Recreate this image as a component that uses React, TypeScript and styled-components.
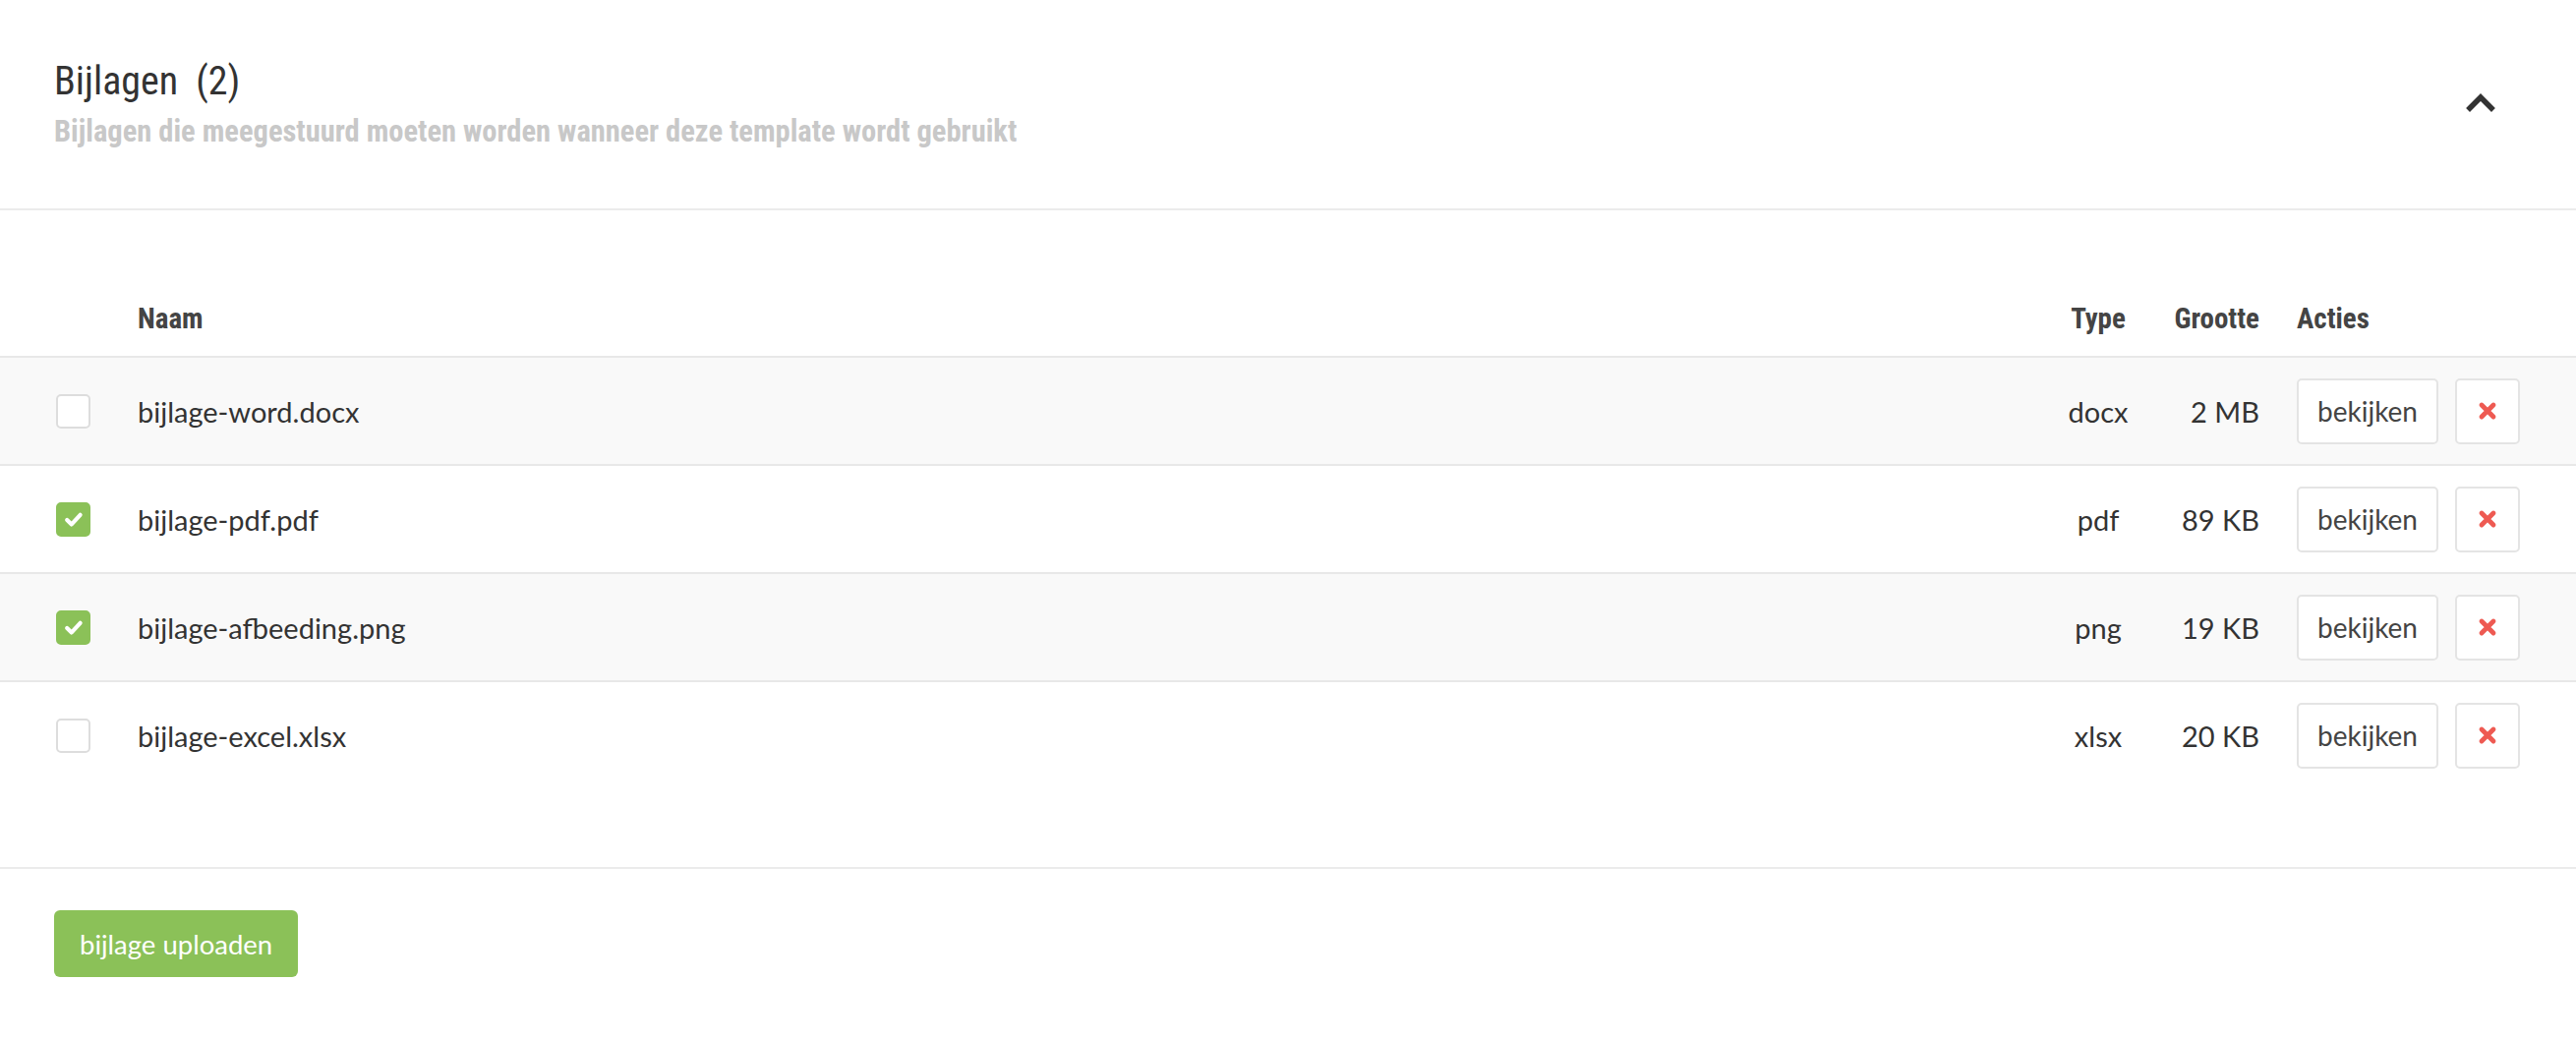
import React from 'react';
import styled, { createGlobalStyle } from 'styled-components';

const condensed = `"Roboto Condensed", "Liberation Sans Narrow", "DejaVu Sans Condensed", Roboto, sans-serif`;
const bodyFont = `Lato, "Open Sans", sans-serif`;

const GlobalStyle = createGlobalStyle`
  html, body {
    margin: 0;
    padding: 0;
    background: #FFFFFF;
  }
  body {
    font-family: ${bodyFont};
    color: #333333;
  }
`;

const StyledPanel = styled.div`
  width: 2620px;
  background: #FFFFFF;
`;

const StyledPanelHeader = styled.div`
  display: flex;
  justify-content: space-between;
  align-items: center;
  height: 214px;
  padding: 0 82px 0 55px;
  box-sizing: border-box;
  border-bottom: 2px solid #EBEBEB;
  h2 {
    margin: 0;
    font-family: ${condensed};
    font-weight: 400;
    font-size: 40px;
    line-height: 46px;
    color: #333333;
    span {
      margin-left: 18px;
    }
  }
  p {
    margin: 10px 0 0;
    font-family: ${condensed};
    font-weight: 700;
    font-size: 30.5px;
    line-height: 36px;
    color: #C8C8C8;
  }
`;

const StyledToggle = styled.button`
  display: flex;
  align-items: center;
  justify-content: center;
  width: 30px;
  height: 30px;
  padding: 0;
  border: none;
  background: none;
  margin-top: -4px;
`;

const StyledTableSection = styled.div`
  padding: 71px 0 80px;
  border-bottom: 2px solid #EBEBEB;
`;

const StyledRow = styled.div<{ $head?: boolean; $striped?: boolean }>`
  display: grid;
  grid-template-columns: 85px 1fr 100px 114px 267px;
  align-items: center;
  padding: 0 55px;
  height: ${p => (p.$head ? '77px' : '108px')};
  background: ${p => (p.$striped ? '#F9F9F9' : '#FFFFFF')};
  border-top: ${p => (p.$head ? 'none' : '2px solid #E8E8E8')};
  font-family: ${p => (p.$head ? condensed : bodyFont)};
  font-weight: ${p => (p.$head ? 700 : 400)};
  font-size: 29px;
  color: ${p => (p.$head ? '#444444' : '#333333')};

  .type {
    text-align: center;
  }
  .size {
    text-align: right;
  }
  .actions {
    display: flex;
    align-items: center;
    gap: 17px;
    padding-left: 38px;
  }
`;

const StyledCheckbox = styled.span<{ $checked: boolean }>`
  display: flex;
  align-items: center;
  justify-content: center;
  width: 35px;
  height: 35px;
  box-sizing: border-box;
  margin-left: 2px;
  border-radius: 5px;
  border: 2px solid ${p => (p.$checked ? '#8BC158' : '#DDDDDD')};
  background: ${p => (p.$checked ? '#8BC158' : '#FFFFFF')};
`;

const StyledButton = styled.button<{ $square?: boolean }>`
  display: flex;
  align-items: center;
  justify-content: center;
  height: 67px;
  width: ${p => (p.$square ? '66px' : '144px')};
  padding: 0;
  box-sizing: border-box;
  border: 2px solid #E4E4E4;
  border-radius: 5px;
  background: #FFFFFF;
  font-family: ${bodyFont};
  font-size: 28px;
  color: #444444;
`;

const StyledFooter = styled.div`
  padding: 42px 55px 60px;
`;

const StyledUploadButton = styled.button`
  height: 68px;
  padding: 0 26px;
  border: none;
  border-radius: 6px;
  background: #8BC158;
  font-family: ${bodyFont};
  font-size: 27.5px;
  color: #FFFFFF;
`;

const attachments = [
  { name: 'bijlage-word.docx', type: 'docx', size: '2 MB', checked: false },
  { name: 'bijlage-pdf.pdf', type: 'pdf', size: '89 KB', checked: true },
  { name: 'bijlage-afbeeding.png', type: 'png', size: '19 KB', checked: true },
  { name: 'bijlage-excel.xlsx', type: 'xlsx', size: '20 KB', checked: false },
];

const ChevronUp = () => (
  <svg width="30" height="20" viewBox="0 0 30 20">
    <polyline points="4,16 15,5 26,16" fill="none" stroke="#333333" strokeWidth="5.5" strokeLinecap="square" strokeLinejoin="miter" />
  </svg>
);

const Check = () => (
  <svg width="20" height="17" viewBox="0 0 20 17">
    <polyline points="3.2,9 7.8,13.4 16.6,3.8" fill="none" stroke="#FFFFFF" strokeWidth="4.2" strokeLinecap="round" strokeLinejoin="round" />
  </svg>
);

const Cross = () => (
  <svg width="20" height="20" viewBox="0 0 20 20">
    <path d="M4 4 L16 16 M16 4 L4 16" fill="none" stroke="#EE5A52" strokeWidth="4.8" strokeLinecap="round" />
  </svg>
);

const App = () => {
  return (
    <StyledPanel>
      <GlobalStyle />
      <StyledPanelHeader>
        <div>
          <h2>Bijlagen<span>(2)</span></h2>
          <p>Bijlagen die meegestuurd moeten worden wanneer deze template wordt gebruikt</p>
        </div>
        <StyledToggle>
          <ChevronUp />
        </StyledToggle>
      </StyledPanelHeader>

      <StyledTableSection>
        <StyledRow $head>
          <div />
          <div>Naam</div>
          <div className="type">Type</div>
          <div className="size">Grootte</div>
          <div className="actions">Acties</div>
        </StyledRow>
        {attachments.map((a, i) => (
          <StyledRow key={a.name} $striped={i % 2 === 0}>
            <div>
              <StyledCheckbox $checked={a.checked}>{a.checked && <Check />}</StyledCheckbox>
            </div>
            <div>{a.name}</div>
            <div className="type">{a.type}</div>
            <div className="size">{a.size}</div>
            <div className="actions">
              <StyledButton>bekijken</StyledButton>
              <StyledButton $square>
                <Cross />
              </StyledButton>
            </div>
          </StyledRow>
        ))}
      </StyledTableSection>

      <StyledFooter>
        <StyledUploadButton>bijlage uploaden</StyledUploadButton>
      </StyledFooter>
    </StyledPanel>
  );
};

export default App;
